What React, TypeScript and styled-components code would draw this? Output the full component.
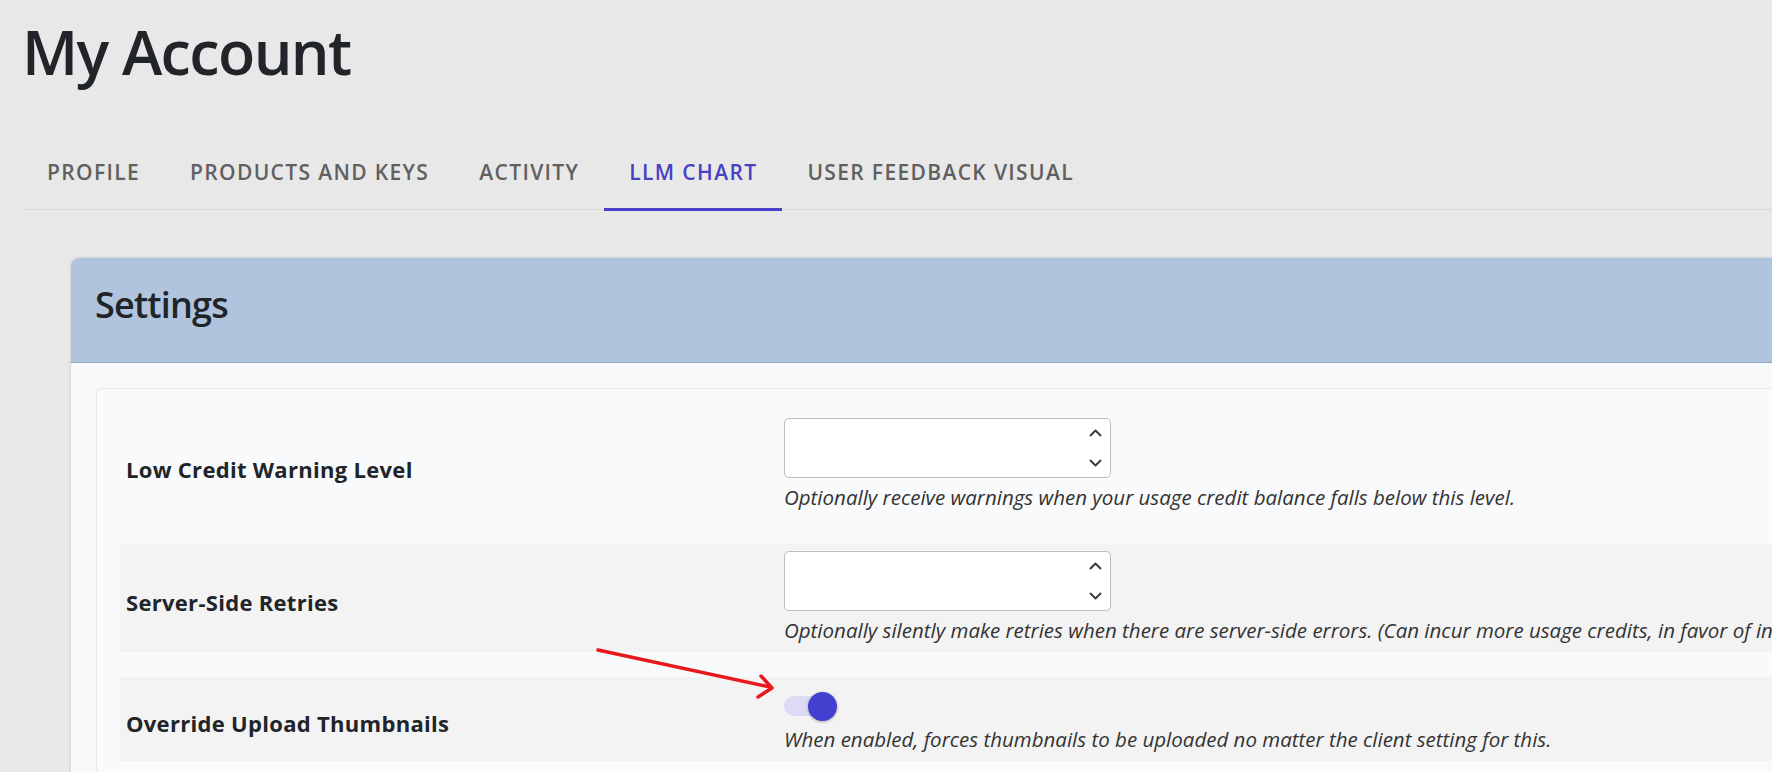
import React from "react";
import styled, { createGlobalStyle } from "styled-components";

const GlobalStyle = createGlobalStyle`
  html, body { margin: 0; padding: 0; background: #e8e8e8; overflow: hidden; }
  body { font-family: "Open Sans", "Noto Sans", sans-serif; color: #212529; }
  * { box-sizing: border-box; }
`;

const Page = styled.div`
  position: relative;
  width: 1772px;
  height: 772px;
  overflow: hidden;
  padding-left: 22px;
`;

const Title = styled.h1`
  margin: 0;
  padding-top: 15px;
  font-size: 61px;
  line-height: 74px;
  font-weight: 600;
  color: #212529;
  letter-spacing: -1.6px;
`;

const TabList = styled.nav`
  display: flex;
  margin-top: 47px;
  border-bottom: 1px solid #d9d9d9;
  width: 2000px;
`;

const Tab = styled.div<{ $active?: boolean }>`
  padding: 22px 25px;
  margin-bottom: -2px;
  font-size: 21px;
  line-height: 28px;
  font-weight: 600;
  letter-spacing: 1.35px;
  text-transform: uppercase;
  color: ${(p) => (p.$active ? "#4741c4" : "#606060")};
  border-bottom: 3px solid ${(p) => (p.$active ? "#4641c6" : "transparent")};
  white-space: nowrap;
`;

const Card = styled.section`
  margin: 48px 0 0 49px;
  width: 1900px;
  border-radius: 8px 8px 0 0;
  background: #f8f9fa;
  box-shadow: 0 0 3px rgba(0, 0, 0, 0.18);
`;

const CardHeader = styled.header`
  background: #b0c4de;
  border-radius: 8px 8px 0 0;
  border-bottom: 1px solid #93a5c2;
  padding: 25px 24px 35px;
`;

const CardTitle = styled.h2`
  margin: 0;
  font-size: 36px;
  line-height: 44px;
  font-weight: 600;
  letter-spacing: -0.8px;
  color: #212529;
`;

const CardBody = styled.div`
  padding: 25px 0 0 25px;
  height: 500px;
`;

const InnerCard = styled.div`
  background: #f9fafb;
  border: 1px solid #ebebeb;
  border-radius: 4px;
  padding: 22px 0 30px 23px;
  display: flex;
  flex-direction: column;
  gap: 25px;
`;

const Row = styled.div<{ $shade?: boolean }>`
  display: grid;
  grid-template-columns: 658px 1fr;
  padding: 7px 0 8px 6px;
  background: ${(p) => (p.$shade ? "#f3f3f4" : "transparent")};
`;

const Label = styled.div`
  align-self: center;
  padding-top: 8px;
  font-size: 22px;
  font-weight: 700;
  letter-spacing: 0.3px;
  color: #212529;
`;

const Field = styled.div`
  display: flex;
  flex-direction: column;
`;

const InputBox = styled.div`
  width: 327px;
  height: 60px;
  border: 1px solid #bcbcbc;
  border-radius: 5px;
  background: #ffffff;
  display: flex;
  align-items: center;
`;

const NumberInput = styled.input`
  flex: 1;
  min-width: 0;
  height: 100%;
  border: none;
  outline: none;
  background: transparent;
  padding: 0 12px;
  font-size: 18px;
  font-family: inherit;
  -moz-appearance: textfield;
  &::-webkit-inner-spin-button,
  &::-webkit-outer-spin-button {
    -webkit-appearance: none;
    margin: 0;
  }
`;

const Spin = styled.div`
  height: 100%;
  padding: 8px 0;
  margin-right: 8px;
  display: flex;
  flex-direction: column;
  justify-content: space-between;
`;

const Chevron = styled.svg`
  display: block;
  width: 13px;
  height: 12px;
`;

const Helper = styled.div<{ $tight?: boolean }>`
  margin-top: ${(p) => (p.$tight ? "1px" : "5px")};
  font-size: 20.5px;
  line-height: 28px;
  font-style: italic;
  color: #333333;
  white-space: nowrap;
`;

const Switch = styled.div`
  height: 40px;
  padding-top: 4px;
  display: flex;
  align-items: center;
`;

const Track = styled.div`
  width: 48px;
  height: 20px;
  border-radius: 10px;
  background: #dddaf3;
`;

const Thumb = styled.div`
  width: 29px;
  height: 29px;
  margin-left: -24px;
  border-radius: 50%;
  background: #4340d0;
  box-shadow: 0 1px 3px rgba(0, 0, 0, 0.3);
`;

const Annotation = styled.svg`
  position: absolute;
  left: 0;
  top: 0;
  width: 1772px;
  height: 772px;
  pointer-events: none;
`;

const ChevronIcon = ({ up }: { up?: boolean }) => (
  <Chevron viewBox="0 0 13 12">
    <polyline
      points={up ? "1.5,8.5 6.5,3.5 11.5,8.5" : "1.5,3.5 6.5,8.5 11.5,3.5"}
      fill="none"
      stroke="#3a3a3a"
      strokeWidth="1.9"
      strokeLinecap="round"
      strokeLinejoin="round"
    />
  </Chevron>
);

const NumberField = () => (
  <InputBox>
    <NumberInput type="number" />
    <Spin>
      <ChevronIcon up />
      <ChevronIcon />
    </Spin>
  </InputBox>
);

const tabs = ["Profile", "Products and Keys", "Activity", "LLM Chart", "User Feedback Visual"];

export default function App() {
  return (
    <>
      <GlobalStyle />
      <Page>
        <Title>My Account</Title>
        <TabList>
          {tabs.map((t) => (
            <Tab key={t} $active={t === "LLM Chart"}>
              {t}
            </Tab>
          ))}
        </TabList>
        <Card>
          <CardHeader>
            <CardTitle>Settings</CardTitle>
          </CardHeader>
          <CardBody>
            <InnerCard>
              <Row>
                <Label>Low Credit Warning Level</Label>
                <Field>
                  <NumberField />
                  <Helper>Optionally receive warnings when your usage credit balance falls below this level.</Helper>
                </Field>
              </Row>
              <Row $shade>
                <Label>Server-Side Retries</Label>
                <Field>
                  <NumberField />
                  <Helper>
                    Optionally silently make retries when there are server-side errors. (Can incur more usage credits, in favor of increased reliability.)
                  </Helper>
                </Field>
              </Row>
              <Row $shade>
                <Label>Override Upload Thumbnails</Label>
                <Field>
                  <Switch>
                    <Track />
                    <Thumb />
                  </Switch>
                  <Helper $tight>When enabled, forces thumbnails to be uploaded no matter the client setting for this.</Helper>
                </Field>
              </Row>
            </InnerCard>
          </CardBody>
        </Card>
        <Annotation viewBox="0 0 1772 772">
          <line x1="598" y1="650" x2="770" y2="687" stroke="#e8191c" strokeWidth="3.5" strokeLinecap="round" />
          <polyline
            points="761,676 772,688 758,697"
            fill="none"
            stroke="#e8191c"
            strokeWidth="3.5"
            strokeLinecap="round"
            strokeLinejoin="round"
          />
        </Annotation>
      </Page>
    </>
  );
}
